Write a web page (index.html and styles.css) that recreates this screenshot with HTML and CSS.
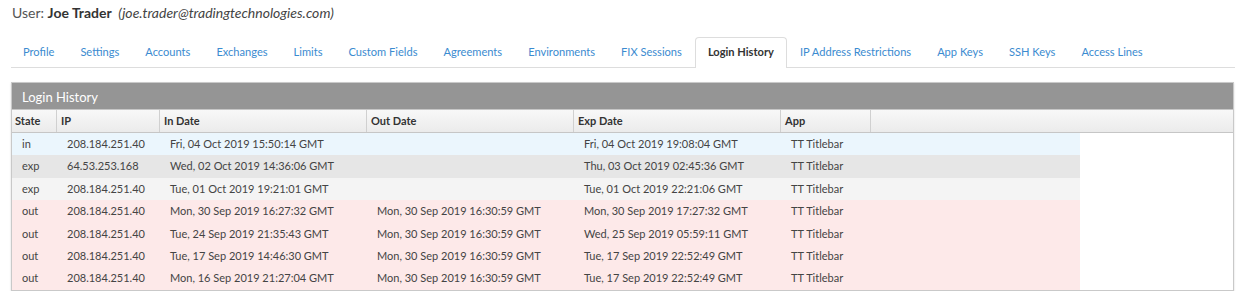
FILE: index.html
```html
<!DOCTYPE html>
<html lang="en">
<head>
  <meta charset="UTF-8">
  <title>Login History</title>
  <link rel="stylesheet" href="styles.css">
</head>
<body>
  <div class="user">User: <strong>Joe Trader</strong> <em>(joe.trader@tradingtechnologies.com)</em></div>

  <ul class="tabs">
    <li>Profile</li>
    <li>Settings</li>
    <li>Accounts</li>
    <li>Exchanges</li>
    <li>Limits</li>
    <li>Custom Fields</li>
    <li>Agreements</li>
    <li>Environments</li>
    <li>FIX Sessions</li>
    <li class="active">Login History</li>
    <li>IP Address Restrictions</li>
    <li>App Keys</li>
    <li>SSH Keys</li>
    <li>Access Lines</li>
  </ul>

  <div class="panel">
    <div class="panel-title">Login History</div>
    <div class="thead">
      <div>State</div>
      <div>IP</div>
      <div>In Date</div>
      <div>Out Date</div>
      <div>Exp Date</div>
      <div>App</div>
      <div></div>
    </div>
    <div class="tbody">
      <div class="row in">
        <div>in</div><div>208.184.251.40</div><div>Fri, 04 Oct 2019 15:50:14 GMT</div><div></div><div>Fri, 04 Oct 2019 19:08:04 GMT</div><div>TT Titlebar</div>
      </div>
      <div class="row exp">
        <div>exp</div><div>64.53.253.168</div><div>Wed, 02 Oct 2019 14:36:06 GMT</div><div></div><div>Thu, 03 Oct 2019 02:45:36 GMT</div><div>TT Titlebar</div>
      </div>
      <div class="row exp alt">
        <div>exp</div><div>208.184.251.40</div><div>Tue, 01 Oct 2019 19:21:01 GMT</div><div></div><div>Tue, 01 Oct 2019 22:21:06 GMT</div><div>TT Titlebar</div>
      </div>
      <div class="row out">
        <div>out</div><div>208.184.251.40</div><div>Mon, 30 Sep 2019 16:27:32 GMT</div><div>Mon, 30 Sep 2019 16:30:59 GMT</div><div>Mon, 30 Sep 2019 17:27:32 GMT</div><div>TT Titlebar</div>
      </div>
      <div class="row out">
        <div>out</div><div>208.184.251.40</div><div>Tue, 24 Sep 2019 21:35:43 GMT</div><div>Mon, 30 Sep 2019 16:30:59 GMT</div><div>Wed, 25 Sep 2019 05:59:11 GMT</div><div>TT Titlebar</div>
      </div>
      <div class="row out">
        <div>out</div><div>208.184.251.40</div><div>Tue, 17 Sep 2019 14:46:30 GMT</div><div>Mon, 30 Sep 2019 16:30:59 GMT</div><div>Tue, 17 Sep 2019 22:52:49 GMT</div><div>TT Titlebar</div>
      </div>
      <div class="row out">
        <div>out</div><div>208.184.251.40</div><div>Mon, 16 Sep 2019 21:27:04 GMT</div><div>Mon, 30 Sep 2019 16:30:59 GMT</div><div>Tue, 17 Sep 2019 22:52:49 GMT</div><div>TT Titlebar</div>
      </div>
    </div>
  </div>
</body>
</html>
```

FILE: styles.css
```css
body {
  margin: 0;
  padding: 4px 11px 0 11px;
  font-family: Lato, "Open Sans", sans-serif;
  color: #444;
  background: #fff;
}
.user {
  font-size: 14px;
  line-height: 18px;
  padding-left: 1px;
  color: #555;
}
.user strong {
  color: #333;
  margin-right: 3px;
}
.user em {
  color: #444;
}
.tabs {
  list-style: none;
  margin: 16px 0 0 0;
  padding: 0;
  display: flex;
  border-bottom: 1px solid #ddd;
  width: 1224px;
}
.tabs li {
  flex: none;
  white-space: nowrap;
  font-size: 11.1px;
  color: #3b8bd0;
  padding: 0 12px;
  height: 29px;
  line-height: 26px;
  border: 1px solid transparent;
  border-bottom: none;
  margin-bottom: -1px;
}
.tabs li:first-child {
  margin-left: -1px;
}
.tabs li.active {
  color: #333;
  font-weight: bold;
  background: #fff;
  border-color: #ddd;
  border-radius: 4px 4px 0 0;
  height: 30px;
  margin-top: -1px;
  line-height: 28px;
}
.panel {
  margin-top: 14px;
  width: 1221px;
  border: 1px solid #c9c9c9;
  box-shadow: 0 1px 2px rgba(0, 0, 0, 0.15);
}
.panel-title {
  background: #959595;
  color: #fff;
  font-size: 13px;
  height: 26px;
  line-height: 28px;
  padding-left: 10px;
}
.thead {
  display: grid;
  grid-template-columns: 44px 103px 207px 207px 207px 90px 1fr;
  background: linear-gradient(#f8f8f8, #ebebeb);
  border-top: 1px solid #c6c6c6;
  border-bottom: 1px solid #c6c6c6;
  font-size: 11px;
  font-weight: bold;
  color: #333;
}
.thead div {
  height: 22px;
  line-height: 22px;
  padding-left: 4px;
  border-left: 1px solid #d0d0d0;
}
.thead div:first-child {
  border-left: none;
  padding-left: 3px;
}
.tbody {
  width: 1068px;
}
.row {
  display: grid;
  grid-template-columns: 44px 103px 207px 207px 207px 1fr;
  height: 22.4px;
  line-height: 22.4px;
  font-size: 11px;
  color: #444;
}
.row div {
  padding-left: 11px;
  white-space: nowrap;
}
.row div:first-child {
  padding-left: 10px;
}
.in { background: #ebf6fd; }
.exp { background: #e6e6e6; }
.exp.alt { background: #f4f4f4; }
.out { background: #fde9e9; }
```
